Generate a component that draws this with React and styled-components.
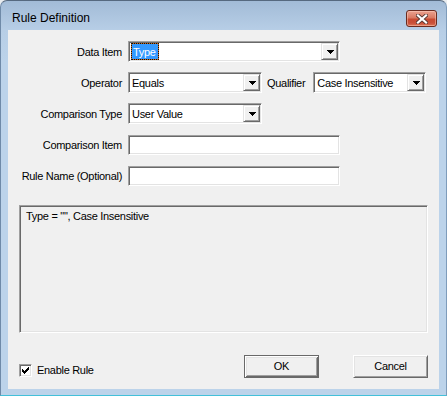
import React from "react";
import styled, { createGlobalStyle } from "styled-components";

const GlobalStyle = createGlobalStyle`
  html, body { margin: 0; padding: 0; background: #e9ecef; }
  body { font-family: "Liberation Sans", Arial, sans-serif; }
  * { box-sizing: border-box; }
`;

const sunken = `
  border: 1px solid;
  border-color: #a0a0a0 #ffffff #ffffff #a0a0a0;
  box-shadow: inset 1px 1px 0 #696969, inset -1px -1px 0 #e3e3e3;
`;

const raised = `
  border: 1px solid;
  border-color: #e3e3e3 #696969 #696969 #e3e3e3;
  box-shadow: inset 1px 1px 0 #ffffff, inset -1px -1px 0 #a0a0a0;
`;

const Window = styled.div`
  width: 447px;
  height: 396px;
  display: flex;
  flex-direction: column;
  border: 1px solid;
  border-color: #56697f #7e9cbb #43c0d9 #6f8aa8;
  border-radius: 7px 7px 0 0;
  background: linear-gradient(to bottom, #a2bbd7 0px, #b7cee6 29px, #bcd3ea 60px, #bcd3ea 100%);
  overflow: hidden;
`;

const TitleBar = styled.div`
  height: 29px;
  flex: none;
  display: flex;
  align-items: flex-start;
  justify-content: space-between;
  padding: 9px 9px 0 11px;
`;

const Title = styled.span`
  font-family: "Liberation Sans", Arial, sans-serif;
  font-size: 12px;
  line-height: 17px;
  color: #000;
`;

const CloseButton = styled.div`
  width: 31px;
  height: 17px;
  border: 1px solid #6a2b1f;
  border-radius: 3px;
  background: linear-gradient(to bottom, #eba290 0%, #d97a63 45%, #c84a31 55%, #c9503a 80%, #de7656 100%);
  box-shadow: inset 0 0 0 1px rgba(255, 215, 200, 0.45);
  display: flex;
  align-items: center;
  justify-content: center;
`;

const Client = styled.div`
  flex: 1;
  margin: 0 7px 6px 7px;
  background: #f0f0f0;
  display: flex;
  flex-direction: column;
  padding-bottom: 11px;
  font-family: "Liberation Sans", Arial, sans-serif;
  font-size: 11px;
  letter-spacing: -0.3px;
  color: #000;
`;

const Form = styled.div`
  display: grid;
  grid-template-columns: 114px auto;
  grid-auto-rows: 21px;
  column-gap: 6px;
  row-gap: 10px;
  padding-top: 11px;
`;

const Label = styled.span`
  justify-self: end;
  align-self: center;
  white-space: nowrap;
`;

const FieldRow = styled.div`
  display: flex;
  align-items: center;
`;

const InlineLabel = styled.span`
  padding: 0 8px 0 5px;
  white-space: nowrap;
`;

const ComboBox = styled.div`
  ${sunken}
  width: ${(p) => p.$w}px;
  height: 21px;
  background-color: #fff;
  display: flex;
  align-items: stretch;
  padding: 1px;
`;

const ComboText = styled.div`
  flex: 1;
  display: flex;
  align-items: center;
  padding-left: 2px;
  padding-top: 1px;
  white-space: nowrap;
  overflow: hidden;
`;

const Selected = styled.span`
  align-self: stretch;
  display: flex;
  align-items: center;
  margin-left: -1px;
  margin-top: -1px;
  padding: 0 2px 0 1px;
  color: #fff;
  border: 1px dotted #101010;
  background: linear-gradient(#3399ff, #3399ff) padding-box, #cc6a1a border-box;
`;

const DropButton = styled.div`
  ${raised}
  width: 17px;
  flex: none;
  background-color: #f0f0f0;
  display: flex;
  align-items: center;
  justify-content: center;
  padding-left: 1px;
`;

const TextBox = styled.div`
  ${sunken}
  width: ${(p) => p.$w}px;
  height: 20px;
  background-color: #fff;
`;

const Summary = styled.div`
  ${sunken}
  margin: 19px 11px 0 11px;
  height: 128px;
  background-color: #f0f0f0;
  padding: 4px 6px;
  line-height: 13px;
  white-space: pre;
`;

const Footer = styled.div`
  margin-top: auto;
  display: flex;
  align-items: flex-end;
  padding: 0 11px;
`;

const CheckRow = styled.label`
  display: flex;
  align-items: center;
  gap: 5px;
  margin-bottom: 1px;
  line-height: 14px;
`;

const CheckBox = styled.span`
  ${sunken}
  width: 13px;
  height: 13px;
  background-color: #fff;
  display: flex;
  align-items: center;
  justify-content: center;
`;

const Buttons = styled.div`
  margin-left: auto;
  display: flex;
  gap: 34px;
`;

const Button = styled.div`
  width: 75px;
  height: 23px;
  display: flex;
  align-items: center;
  justify-content: center;
  background: #f0f0f0;
  padding-bottom: 1px;
  ${(p) =>
    p.$default
      ? `
    border: 1px solid #696969;
    box-shadow: inset 1px 1px 0 #ffffff, inset -1px -1px 0 #696969, inset 2px 2px 0 #e3e3e3, inset -2px -2px 0 #a0a0a0;
  `
      : `
    border: 1px solid;
    border-color: #ffffff #696969 #696969 #ffffff;
    box-shadow: inset 1px 1px 0 #e3e3e3, inset -1px -1px 0 #a0a0a0;
  `}
`;

const Arrow = () => (
  <svg width="7" height="4" viewBox="0 0 7 4" shapeRendering="crispEdges">
    <path d="M0 0h7v1H0zM1 1h5v1H1zM2 2h3v1H2zM3 3h1v1H3z" fill="#000" />
  </svg>
);

const Check = () => (
  <svg width="7" height="7" viewBox="0 0 7 7" shapeRendering="crispEdges">
    <path
      d="M6 0h1v1h-1zM5 1h2v1h-2zM0 2h1v1h-1zM4 2h3v1h-3zM0 3h2v1h-2zM3 3h3v1h-3zM0 4h5v1h-5zM1 5h3v1h-3zM2 6h1v1h-1z"
      fill="#000"
    />
  </svg>
);

const CloseGlyph = () => (
  <svg width="12" height="10" viewBox="0 0 12 10">
    <path d="M2 1.5L10 8.5M10 1.5L2 8.5" stroke="#5a3a34" strokeWidth="4" strokeLinecap="square" />
    <path d="M2 1.5L10 8.5M10 1.5L2 8.5" stroke="#ffffff" strokeWidth="2.2" strokeLinecap="square" />
  </svg>
);

const Combo = ({ w, children }) => (
  <ComboBox $w={w}>
    <ComboText>{children}</ComboText>
    <DropButton>
      <Arrow />
    </DropButton>
  </ComboBox>
);

export default function App() {
  return (
    <>
      <GlobalStyle />
      <Window>
        <TitleBar>
          <Title>Rule Definition</Title>
          <CloseButton>
            <CloseGlyph />
          </CloseButton>
        </TitleBar>
        <Client>
          <Form>
            <Label>Data Item</Label>
            <FieldRow>
              <Combo w={212}>
                <Selected>Type</Selected>
              </Combo>
            </FieldRow>

            <Label>Operator</Label>
            <FieldRow>
              <Combo w={134}>Equals</Combo>
              <InlineLabel>Qualifier</InlineLabel>
              <Combo w={113}>Case Insensitive</Combo>
            </FieldRow>

            <Label>Comparison Type</Label>
            <FieldRow>
              <Combo w={134}>User Value</Combo>
            </FieldRow>

            <Label>Comparison Item</Label>
            <FieldRow>
              <TextBox $w={212} />
            </FieldRow>

            <Label>Rule Name (Optional)</Label>
            <FieldRow>
              <TextBox $w={212} />
            </FieldRow>
          </Form>

          <Summary>{'Type = "", Case Insensitive'}</Summary>

          <Footer>
            <CheckRow>
              <CheckBox>
                <Check />
              </CheckBox>
              Enable Rule
            </CheckRow>
            <Buttons>
              <Button $default>OK</Button>
              <Button>Cancel</Button>
            </Buttons>
          </Footer>
        </Client>
      </Window>
    </>
  );
}
